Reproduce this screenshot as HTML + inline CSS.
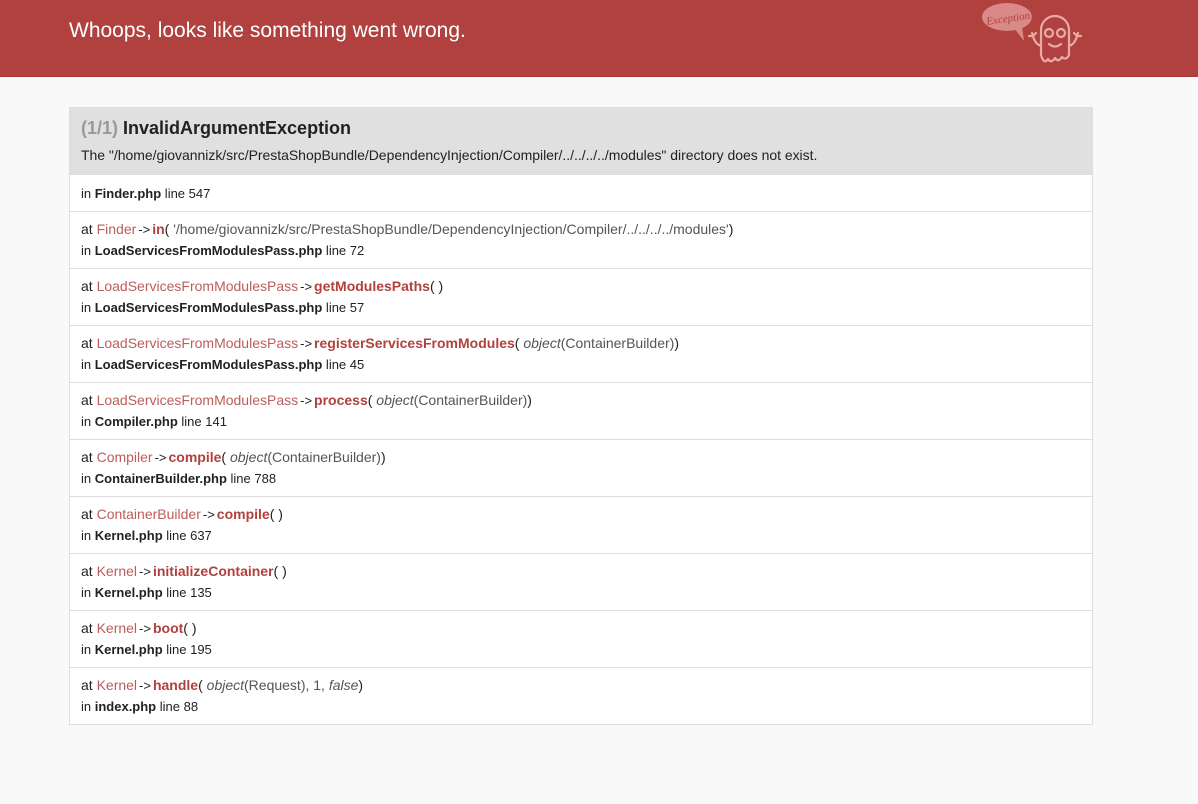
<!DOCTYPE html>
<html><head><meta charset="utf-8"><style>
body{margin:0;background:#f9f9f9;font-family:"Liberation Sans",Arial,sans-serif;color:#222;width:1198px;height:804px;overflow:hidden}
.hdr{height:76px;background:#b0413e;position:relative;border-bottom:1px solid #a33a37}
.hdr h1{margin:0;position:absolute;left:69px;top:19px;font-size:21px;font-weight:normal;color:#fff}
.box{position:absolute;left:69px;top:107px;width:1022px;border:1px solid #ddd;background:#fff}
.t{background:#e0e0e0;padding:9px 11px 9px 11px;height:48px}
.t h2{margin:0;font-size:18px;font-weight:bold;color:#222;line-height:22px}
.t h2 span{color:#999}
.t p{margin:7px 0 0;font-size:14px;line-height:18px;letter-spacing:-0.03px}
.r{border-top:1px solid #ddd;padding:0 11px;font-size:14px}
.r0{height:36px;line-height:38px;font-size:13px}
.r1{height:56px}
.a{padding-top:8px;line-height:18px;color:#222}
.b{font-size:13px;line-height:18px;margin-top:3px}
.c{color:#b0413e;opacity:.85}
.m{color:#b0413e;font-weight:bold}
.g{color:#555}
i{color:#555}
.ar{margin:0 2px;font-size:13px}
</style></head><body>
<div class="hdr"><h1>Whoops, looks like something went wrong.</h1>
<svg style="position:absolute;left:980px;top:0px" width="115" height="70" viewBox="0 0 115 70" fill="none" stroke="#e8a9a7" stroke-width="2.2" stroke-linecap="round" stroke-linejoin="round">
<ellipse cx="27" cy="17" rx="25" ry="14" fill="#d98987" stroke="none"/>
<path d="M34 28 L44 41 L42 26Z" fill="#d98987" stroke="none"/>
<text x="6" y="22" font-size="11" font-style="italic" fill="#b0413e" stroke="none" font-family="Liberation Serif" transform="rotate(-8 27 17)">Exception!</text>
<path d="M61 55 V30 a14 14 0 0 1 28 0 V55 q-3 6 -7 2 q-4 6 -7 1 q-4 6 -7 1 q-4 6 -7 -4z"/>
<circle cx="69" cy="33" r="4"/><circle cx="81" cy="33" r="4"/>
<path d="M69 44 q6 5 12 0"/>
<path d="M61 46 q-6 -2 -8 -10 M53 36 l-1 -3 M53 36 l3 -3 M53 36 l-4 0"/>
<path d="M89 46 q6 -2 8 -10 M97 36 l1 -3 M97 36 l-3 -3 M97 36 l4 0"/>
</svg></div>
<div class="box">
<div class="t"><h2><span>(1/1)</span> InvalidArgumentException</h2><p>The "/home/giovannizk/src/PrestaShopBundle/DependencyInjection/Compiler/../../../../modules" directory does not exist.</p></div>
<div class="r r0">in <b>Finder.php</b> line 547</div>
<div class="r r1"><div class="a">at <span class="c">Finder</span><span class="ar">-&gt;</span><span class="m">in</span>( <span class="g">'/home/giovannizk/src/PrestaShopBundle/DependencyInjection/Compiler/../../../../modules'</span>)</div><div class="b">in <b>LoadServicesFromModulesPass.php</b> line 72</div></div>
<div class="r r1"><div class="a">at <span class="c">LoadServicesFromModulesPass</span><span class="ar">-&gt;</span><span class="m">getModulesPaths</span>( )</div><div class="b">in <b>LoadServicesFromModulesPass.php</b> line 57</div></div>
<div class="r r1"><div class="a">at <span class="c">LoadServicesFromModulesPass</span><span class="ar">-&gt;</span><span class="m">registerServicesFromModules</span>( <i>object</i><span class="g">(ContainerBuilder)</span>)</div><div class="b">in <b>LoadServicesFromModulesPass.php</b> line 45</div></div>
<div class="r r1"><div class="a">at <span class="c">LoadServicesFromModulesPass</span><span class="ar">-&gt;</span><span class="m">process</span>( <i>object</i><span class="g">(ContainerBuilder)</span>)</div><div class="b">in <b>Compiler.php</b> line 141</div></div>
<div class="r r1"><div class="a">at <span class="c">Compiler</span><span class="ar">-&gt;</span><span class="m">compile</span>( <i>object</i><span class="g">(ContainerBuilder)</span>)</div><div class="b">in <b>ContainerBuilder.php</b> line 788</div></div>
<div class="r r1"><div class="a">at <span class="c">ContainerBuilder</span><span class="ar">-&gt;</span><span class="m">compile</span>( )</div><div class="b">in <b>Kernel.php</b> line 637</div></div>
<div class="r r1"><div class="a">at <span class="c">Kernel</span><span class="ar">-&gt;</span><span class="m">initializeContainer</span>( )</div><div class="b">in <b>Kernel.php</b> line 135</div></div>
<div class="r r1"><div class="a">at <span class="c">Kernel</span><span class="ar">-&gt;</span><span class="m">boot</span>( )</div><div class="b">in <b>Kernel.php</b> line 195</div></div>
<div class="r r1"><div class="a">at <span class="c">Kernel</span><span class="ar">-&gt;</span><span class="m">handle</span>( <i>object</i><span class="g">(Request), 1, </span><i>false</i>)</div><div class="b">in <b>index.php</b> line 88</div></div>
</div>
</body></html>
